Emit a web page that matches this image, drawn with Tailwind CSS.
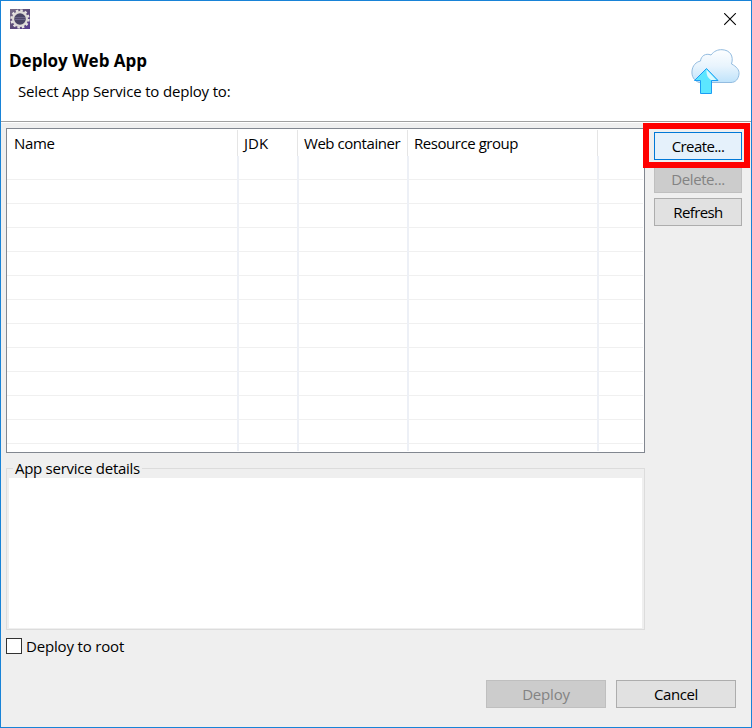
<!DOCTYPE html>
<html lang="en">
<head>
<meta charset="utf-8">
<title>Deploy Web App</title>
<script src="https://cdn.jsdelivr.net/npm/@tailwindcss/browser@4"></script>
</head>
<body class="h-[728px] w-[752px] overflow-hidden font-['Open_Sans','Noto_Sans',sans-serif] text-[15px] leading-5 text-black">
<div class="relative flex h-[728px] w-[752px] flex-col border border-[#1883d7] bg-[#efefef]">
  <header class="flex h-[122px] shrink-0 flex-col border-b border-b-white bg-white">
    <div class="flex h-[121px] justify-between border-b border-[#a0a0a0]">
      <div class="flex flex-col pt-2 pl-[9px]">
        <svg class="size-5" viewBox="0 0 20 20">
          <defs><linearGradient id="bg" x1="0" y1="0" x2="1" y2="1"><stop offset="0" stop-color="#79708a"/><stop offset=".5" stop-color="#5b4a78"/><stop offset="1" stop-color="#583c91"/></linearGradient></defs>
          <rect width="20" height="20" fill="url(#bg)"/>
          <circle cx="10" cy="10" r="8.5" fill="none" stroke="#e6e4e2" stroke-width="2.4" stroke-dasharray="2.5 1.95"/>
          <circle cx="10" cy="10" r="6.900" fill="#4a4565" stroke="#dedbd8" stroke-width="2.2"/>
          <path d="M5 8.600h10M4.800 10.500h10.400" stroke="#6b668b" stroke-width="1"/>
        </svg>
        <h1 class="mt-[21px] -ml-px text-[17px] leading-[22px] font-bold whitespace-nowrap"><span>Deploy Web App</span></h1>
        <p class="mt-[9px] pl-2 whitespace-nowrap"><span class="tracking-[-0.18px]">Select App Service to deploy to:</span></p>
      </div>
      <div class="flex flex-col items-end pt-[12px] pr-[11px]">
        <svg class="mr-[3px] size-[13px]" viewBox="0 0 13 13"><path d="M.2.2l11.600 11.600M11.800.2L.2 11.800" stroke="#000" stroke-width="1.1"/></svg>
        <svg class="mt-[22px] h-[48px] w-[50px]" viewBox="0 0 50 48">
          <defs>
            <linearGradient id="cloud" x1="0" y1="0" x2="0" y2="1"><stop offset="0" stop-color="#fdfeff"/><stop offset=".5" stop-color="#e8f4fd"/><stop offset="1" stop-color="#bfe3fb"/></linearGradient>
          </defs>
          <path d="M9 34.500C4 32.500 1.500 28.500 2 23C2.500 17.500 6 14 10.500 13C11 8 15.500 4.800 21 7C24 3 28 1.500 32 1.700C40 2 44 8 41.500 16C46.500 18.500 49.500 22 49 26C48.500 31 45.500 34.500 41 34.500Z" fill="url(#cloud)" stroke="#93bce0"/>
          <path d="M16.500 20.500L28 32.500H21.500V45.500H10.500V32.500H4.500Z" fill="#5ce6ff" stroke="#1b9df5" stroke-linejoin="round"/>
          <path d="M16.600 21.800L26.300 32H21C17.500 30 16 26 16.600 21.800Z" fill="#dcfaff"/>
        </svg>
      </div>
    </div>
  </header>

  <main class="flex shrink-0 pt-[5px] pl-[5px]">
    <section class="relative h-[325px] w-[639px] border border-[#828790] bg-white pr-px">
      <div class="flex h-[27px] pt-px">
        <div class="w-[231px] border-r border-[#e5e5e5] pt-[3px] pl-[7px]"><span class="tracking-[-0.35px]">Name</span></div>
        <div class="w-[60px] border-r border-[#e5e5e5] pt-[3px] pl-[6px]"><span>JDK</span></div>
        <div class="w-[110px] border-r border-[#e5e5e5] pt-[3px] pl-[6px] whitespace-nowrap"><span class="tracking-[-0.45px]">Web container</span></div>
        <div class="w-[190px] border-r border-[#e5e5e5] pt-[3px] pl-[6px]"><span class="tracking-[-0.45px]">Resource group</span></div>
      </div>
      <div class="grid grid-rows-[repeat(12,24px)]">
        <div class="border-b border-[#f0f0f0]"></div><div class="border-b border-[#f0f0f0]"></div><div class="border-b border-[#f0f0f0]"></div><div class="border-b border-[#f0f0f0]"></div>
        <div class="border-b border-[#f0f0f0]"></div><div class="border-b border-[#f0f0f0]"></div><div class="border-b border-[#f0f0f0]"></div><div class="border-b border-[#f0f0f0]"></div>
        <div class="border-b border-[#f0f0f0]"></div><div class="border-b border-[#f0f0f0]"></div><div class="border-b border-[#f0f0f0]"></div><div class="border-b border-[#f0f0f0]"></div>
      </div>
      <div class="absolute top-[27px] bottom-px left-0 flex">
        <div class="w-[232px] border-r-2 border-[#edf0f6]"></div><div class="w-[60px] border-r-2 border-[#edf0f6]"></div><div class="w-[110px] border-r-2 border-[#edf0f6]"></div><div class="w-[190px] border-r-2 border-[#edf0f6]"></div>
      </div>
    </section>
    <aside class="ml-[9px] flex w-[88px] flex-col gap-[5px] pt-1">
      <button class="h-7 border border-[#0078d7] bg-[#e5f1fb]"><span class="tracking-[-0.6px]">Create...</span></button>
      <button class="h-7 border border-[#bfbfbf] bg-[#cccccc] text-[#838383]"><span class="tracking-[-0.4px]">Delete...</span></button>
      <button class="h-7 border border-[#adadad] bg-[#e1e1e1]"><span class="tracking-[-0.6px]">Refresh</span></button>
    </aside>
  </main>

  <section class="relative mt-[15px] ml-[5px] flex h-[162px] w-[639px] shrink-0 border border-[#dcdcdc] pt-[9px] pr-[2px] pb-px pl-[2px]">
    <div class="flex-1 bg-white"></div>
    <h2 class="absolute top-[-11px] left-[6px] h-5 bg-[#efefef] px-[2px] whitespace-nowrap"><span class="tracking-[-0.28px]">App service details</span></h2>
  </section>

  <label class="mt-[5px] ml-[5px] flex h-[22px] shrink-0 items-center"><span class="size-4 border border-[#333] bg-white"></span><span class="ml-1 whitespace-nowrap"><span class="tracking-[-0.17px]">Deploy to root</span></span></label>

  <footer class="mt-[23px] flex shrink-0 justify-end gap-[10px] pr-[15px]">
    <button class="h-7 w-[120px] border border-[#bfbfbf] bg-[#cccccc] text-[#838383]"><span class="tracking-[-0.2px]">Deploy</span></button>
    <button class="h-7 w-[120px] border border-[#adadad] bg-[#e1e1e1]"><span class="tracking-[-0.4px]">Cancel</span></button>
  </footer>

  <div class="pointer-events-none absolute top-[122px] left-[642px] h-[45px] w-[107px] border-6 border-[#ff0000]"></div>
</div>
</body>
</html>
